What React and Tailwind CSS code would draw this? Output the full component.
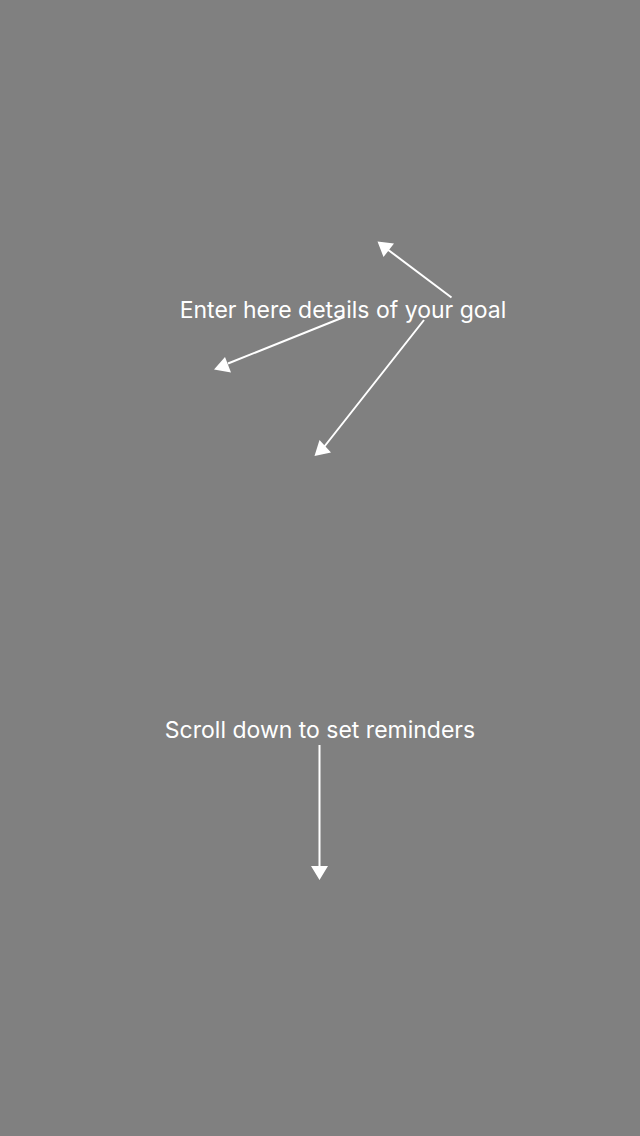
export default function App() {
  return (
    <main className="flex min-h-screen flex-col items-center bg-[#808080] font-['Inter',sans-serif] text-[23px] leading-7 font-normal text-white">
      <section className="relative ml-[46px] pt-[296px] whitespace-nowrap">
        <p>Enter here details of your goal</p>
        <svg className="absolute top-[232px] left-0 overflow-visible" width="326" height="232" viewBox="180 232 326 232" fill="white" stroke="white" aria-hidden="true">
          <path d="M451.500 297.500L387 249M344 317L228 363.500M424 320L324 447" strokeWidth="2" />
          <path d="M377.500 241.500L394 243.500L383.500 257ZM214 369.500L225 357L231 372.500ZM314.500 456L319.500 440L331 452.500Z" stroke="none" />
        </svg>
      </section>
      <section className="mt-[392px] flex flex-col items-center whitespace-nowrap">
        <p>Scroll down to set reminders</p>
        <svg width="18" height="136" viewBox="0 0 18 136" fill="white" aria-hidden="true">
          <path d="M7.500 1h2v121H17L8.500 136L0 122h7.500Z" />
        </svg>
      </section>
    </main>
  );
}
